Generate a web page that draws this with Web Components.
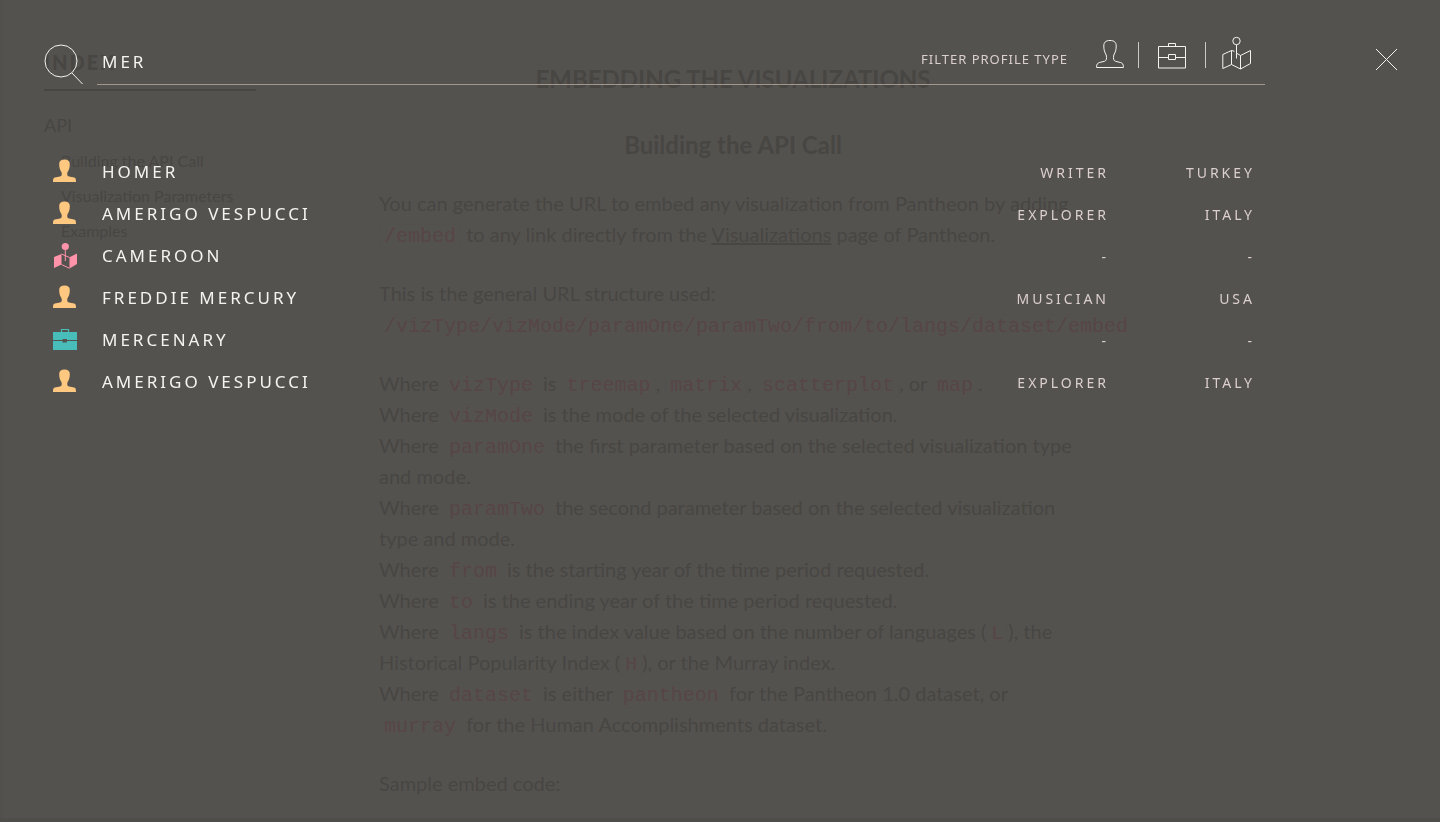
<!DOCTYPE html>
<html lang="en">
<head>
<meta charset="utf-8">
<title>Pantheon</title>
<style>
  :root {
    --ground: #54524f;
    --ink: #484643;
    --code: #574547;
    --bright: #f5f3f0;
    --soft: #dccfd0;
    --rule: #a3978c;
  }
  body { margin: 0; background: var(--ground); height: 100vh; overflow: hidden; }
</style>
</head>
<body>
<docs-page>
  <docs-index slot="index"></docs-index>
  <docs-article></docs-article>
</docs-page>
<search-overlay>
  <search-bar slot="bar"></search-bar>
  <search-results></search-results>
</search-overlay>

<script>
const define = (name, html, setup) => {
  const template = document.createElement('template');
  template.innerHTML = html;
  customElements.define(name, class extends HTMLElement {
    constructor() {
      super();
      this.attachShadow({ mode: 'open' }).append(template.content.cloneNode(true));
      if (setup) setup(this.shadowRoot);
    }
  });
};

define('docs-page', `
  <style>
    :host { display: grid; grid-template-columns: 212px minmax(0, 708px); column-gap: 123px;
      box-sizing: border-box; min-height: 100vh; padding: 0 44px 0 41px;
      border-left: 3px solid #52504d; background: var(--ground);
      font-family: Lato, "Liberation Sans", sans-serif; color: var(--ink); }
  </style>
  <slot name="index"></slot>
  <slot></slot>`);

define('docs-index', `
  <style>
    :host { display: block; padding-top: 44px; }
    h2 { margin: 0; padding: 0 0 9px; font-size: 20px; line-height: 36px; font-weight: 900; letter-spacing: 2px; border-bottom: 2px solid var(--ink); }
    h3 { margin: 16px 0 0; font-size: 18px; line-height: 36px; font-weight: 400; }
    ul { margin: 0; padding: 0 0 0 17px; list-style: none; }
    li { font-size: 16px; line-height: 35px; }
    a { color: inherit; text-decoration: none; }
  </style>
  <h2>INDEX</h2>
  <h3>API</h3>
  <ul>
    <li><a href="#call">Building the API Call</a></li>
    <li><a href="#params">Visualization Parameters</a></li>
    <li><a href="#examples">Examples</a></li>
  </ul>`);

define('docs-article', `
  <style>
    :host { display: block; padding-top: 61px; font-size: 20px; line-height: 31px; }
    h1, h2 { margin: 0; font-size: 24px; line-height: 36px; font-weight: 700; text-align: center; }
    h2 { margin: 30px 0 25px; }
    p { margin: 0; }
    p + p { margin-top: 28px; }
    code { font: 20px "Liberation Mono", monospace; line-height: 24px; color: var(--code); padding: 0 4px; border: 1px solid #535150; border-radius: 4px; white-space: nowrap; }
    a { color: inherit; }
  </style>
  <h1>EMBEDDING THE VISUALIZATIONS</h1>
  <h2 id="call">Building the API Call</h2>
  <p>You can generate the URL to embed any visualization from Pantheon by adding <code>/embed</code> to any link directly from the <a href="#visualizations">Visualizations</a> page of Pantheon.</p>
  <p>This is the general URL structure used: <code>/vizType/vizMode/paramOne/paramTwo/from/to/langs/dataset/embed</code></p>
  <p>Where <code>vizType</code> is <code>treemap</code>, <code>matrix</code>, <code>scatterplot</code>, or <code>map</code>.<br>
  Where <code>vizMode</code> is the mode of the selected visualization.<br>
  Where <code>paramOne</code> the first parameter based on the selected visualization type and mode.<br>
  Where <code>paramTwo</code> the second parameter based on the selected visualization type and mode.<br>
  Where <code>from</code> is the starting year of the time period requested.<br>
  Where <code>to</code> is the ending year of the time period requested.<br>
  Where <code>langs</code> is the index value based on the number of languages (<code>L</code>), the Historical Popularity Index (<code>H</code>), or the Murray index.<br>
  Where <code>dataset</code> is either <code>pantheon</code> for the Pantheon 1.0 dataset, or <code>murray</code> for the Human Accomplishments dataset.</p>
  <p>Sample embed code:</p>`);

define('search-overlay', `
  <style>
    :host { display: block; position: fixed; inset: 0; box-sizing: border-box; padding: 36px 42px 0 44px;
      border-bottom: 4px solid #504e4b;
      font-family: "Noto Sans", "Open Sans", sans-serif; color: var(--bright); }
    .results { margin: 65px 131px 0 0; }
  </style>
  <slot name="bar"></slot>
  <div class="results"><slot></slot></div>`);

define('search-bar', `
  <style>
    :host { display: flex; align-items: flex-end; }
    svg { display: block; fill: none; stroke: currentColor; }
    .glass { margin-right: 14px; }
    .field { flex: 1; min-width: 0; display: flex; align-items: center; box-sizing: border-box; height: 49px; border-bottom: 1px solid var(--rule); }
    input { flex: 1; min-width: 0; height: 34px; border: 0; outline: 0; padding: 2px 0 0 5px; background: none; color: inherit; font: 17px "Noto Sans", sans-serif; letter-spacing: 3px; text-transform: uppercase; }
    .filters { display: flex; align-items: flex-start; align-self: flex-start; font-size: 13px; line-height: 46px; letter-spacing: 1px; color: var(--soft); }
    .filters span { margin-right: 28px; }
    button { display: block; border: 0; padding: 0; background: none; color: var(--bright); }
    i { width: 1px; height: 26px; margin-top: 6px; background: #cbc9c6; }
    .person { margin-right: 13px; } .case { margin: 0 18px 0 19px; } .map { margin: 0 13px 0 16px; }
    .close { margin: 0 0 14px 110px; }
  </style>
  <svg class="glass" width="39" height="41" viewBox="0 0 39 41"><circle cx="17" cy="17" r="16"/><path d="M28 29 38.500 40"/></svg>
  <div class="field">
    <input type="text" value="MER" aria-label="Search">
    <div class="filters">
      <span>FILTER PROFILE TYPE</span>
      <button class="person" aria-label="People"><svg width="29" height="36" viewBox="0 0 29 36"><path d="M14 4.500C9.500 4.500 7.800 6.500 7.800 10C7.800 14 8.600 16 10.200 19C11 22.500 10.500 24.500 8.500 25.300L3.500 26.500C1.300 27.200 .6 28 .6 31.500H27.400C27.400 28 26.700 27.200 24.500 26.500L19.500 25.300C17.500 24.500 17 22.500 17.800 19C19.400 16 20.200 14 20.200 10C20.200 6.500 18.500 4.500 14 4.500Z"/></svg></button>
      <i></i>
      <button class="case" aria-label="Occupations"><svg width="29" height="36" viewBox="0 0 29 36"><path d="M.5 10.500H27.500V32H.5ZM10.500 10.500V7.500H17.500V10.500M.5 21.500H10.500M17.500 21.500H27.500M10.500 18.500H17.500V23.500H10.500Z"/></svg></button>
      <i></i>
      <button class="map" aria-label="Places"><svg width="30" height="36" viewBox="0 0 30 36"><path d="M12.500 15.300 9.500 14.500 .8 18.500V32.500L9.500 28.500 18.500 33 28.500 27.500V14.500L18.500 19.500 14.500 17.200M9.500 14.500V28.500M18.500 19.500V33M14.500 8.800V22.500"/><circle cx="14.500" cy="5" r="3.700"/></svg></button>
    </div>
  </div>
  <button class="close" aria-label="Close"><svg width="23" height="23" viewBox="0 0 23 23"><path d="M1 1 22 22M22 1 1 22"/></svg></button>`);

const icons = {
  person: '<svg width="24" height="24" viewBox="0 0 24 24" fill="#ffc880"><path d="M11.500 .5C7.900 .5 6.200 2.200 6.200 5C6.200 8.500 7 11 8.600 13.500C9 16 8.800 17 7 17.500L1.800 18.600C.4 19 0 19.800 0 23H23C23 19.800 22.600 19 21.200 18.600L16 17.500C14.200 17 14 16 14.400 13.500C16 11 16.800 8.500 16.800 5C16.800 2.200 15.100 .5 11.500 .5Z"/></svg>',
  map: '<svg width="24" height="27" viewBox="0 0 24 27" fill="#ff93aa"><circle cx="12.300" cy="4.500" r="3.600"/><path d="M1 15 8.500 12V22.500L1 26ZM16.500 15.200 24 11.500V22L16.500 26.500Z"/><path d="M12.300 7V19M8.500 12 16.500 15.500M8.500 22.500 16.500 26.300" fill="none" stroke="#ff93aa"/></svg>',
  case: '<svg width="24" height="24" viewBox="0 0 24 24" fill="#48bdb9"><path d="M8.500 5V2.500H15.500V5" fill="none" stroke="#48bdb9" stroke-width="1.200"/><path d="M0 5H24V13H14V12H9.500V13H0ZM0 14H9.500V15.500H14V14H24V23H0Z"/></svg>'
};

const found = [
  ['person', 'HOMER', 'WRITER', 'TURKEY'],
  ['person', 'AMERIGO VESPUCCI', 'EXPLORER', 'ITALY'],
  ['map', 'CAMEROON', '-', '-'],
  ['person', 'FREDDIE MERCURY', 'MUSICIAN', 'USA'],
  ['case', 'MERCENARY', '-', '-'],
  ['person', 'AMERIGO VESPUCCI', 'EXPLORER', 'ITALY']
];

define('search-results', `
  <style>
    :host { display: block; }
    table { width: 100%; border-collapse: collapse; table-layout: fixed; }
    td { height: 42px; padding: 0; vertical-align: middle; box-sizing: border-box; }
    .icon { width: 58px; padding-left: 9px; }
    .name { font-size: 17px; letter-spacing: 3px; }
    .detail { width: 158px; padding-top: 2px; font-size: 14px; letter-spacing: 3px; color: var(--soft); text-align: right; }
    .place { padding-right: 12px; }
    svg { display: block; }
    a { color: inherit; text-decoration: none; }
  </style>
  <table><tbody></tbody></table>`, root => {
  root.querySelector('tbody').innerHTML = found.map(([kind, name, job, place]) =>
    `<tr><td class="icon">${icons[kind]}</td><td class="name"><a href="#profile">${name}</a></td><td class="detail">${job}</td><td class="detail place">${place}</td></tr>`).join('');
});
</script>
</body>
</html>
